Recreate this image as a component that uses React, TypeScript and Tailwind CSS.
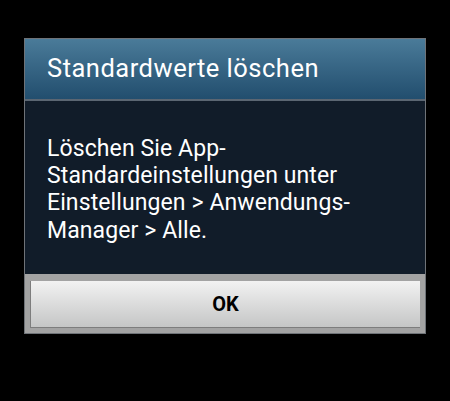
export default function App() {
  return (
    <div className="h-[401px] w-[450px] bg-black pl-[24px] pt-[38px] font-['Roboto',sans-serif]">
      <div className="flex w-[402px] flex-col border border-[#6f7378] bg-[#111c29]">
        <div className="flex h-[62px] items-center border-b-2 border-[#5b6672] bg-gradient-to-b from-[#4a7b99] to-[#224e6e] pl-[22px]">
          <h1 className="text-[25.5px] leading-none tracking-[0.5px] text-white">Standardwerte löschen</h1>
        </div>
        <div className="h-[173px] px-[22px] pt-[34px]">
          <p className="text-[23px] leading-[27.2px] tracking-[0.1px] text-white">
            Löschen Sie App-
            <br />
            Standardeinstellungen unter
            <br />
            Einstellungen &gt; Anwendungs-
            <br />
            Manager &gt; Alle.
          </p>
        </div>
        <div className="bg-[#a3a3a3] px-[5px] pb-[5px] pt-[7px]">
          <button
            type="button"
            className="flex h-[47px] w-full items-center justify-center border-b border-l border-[#7d7d7d] bg-gradient-to-b from-[#f2f2f2] to-[#c5c6c6] text-[20px] font-bold text-black"
          >
            OK
          </button>
        </div>
      </div>
    </div>
  )
}
